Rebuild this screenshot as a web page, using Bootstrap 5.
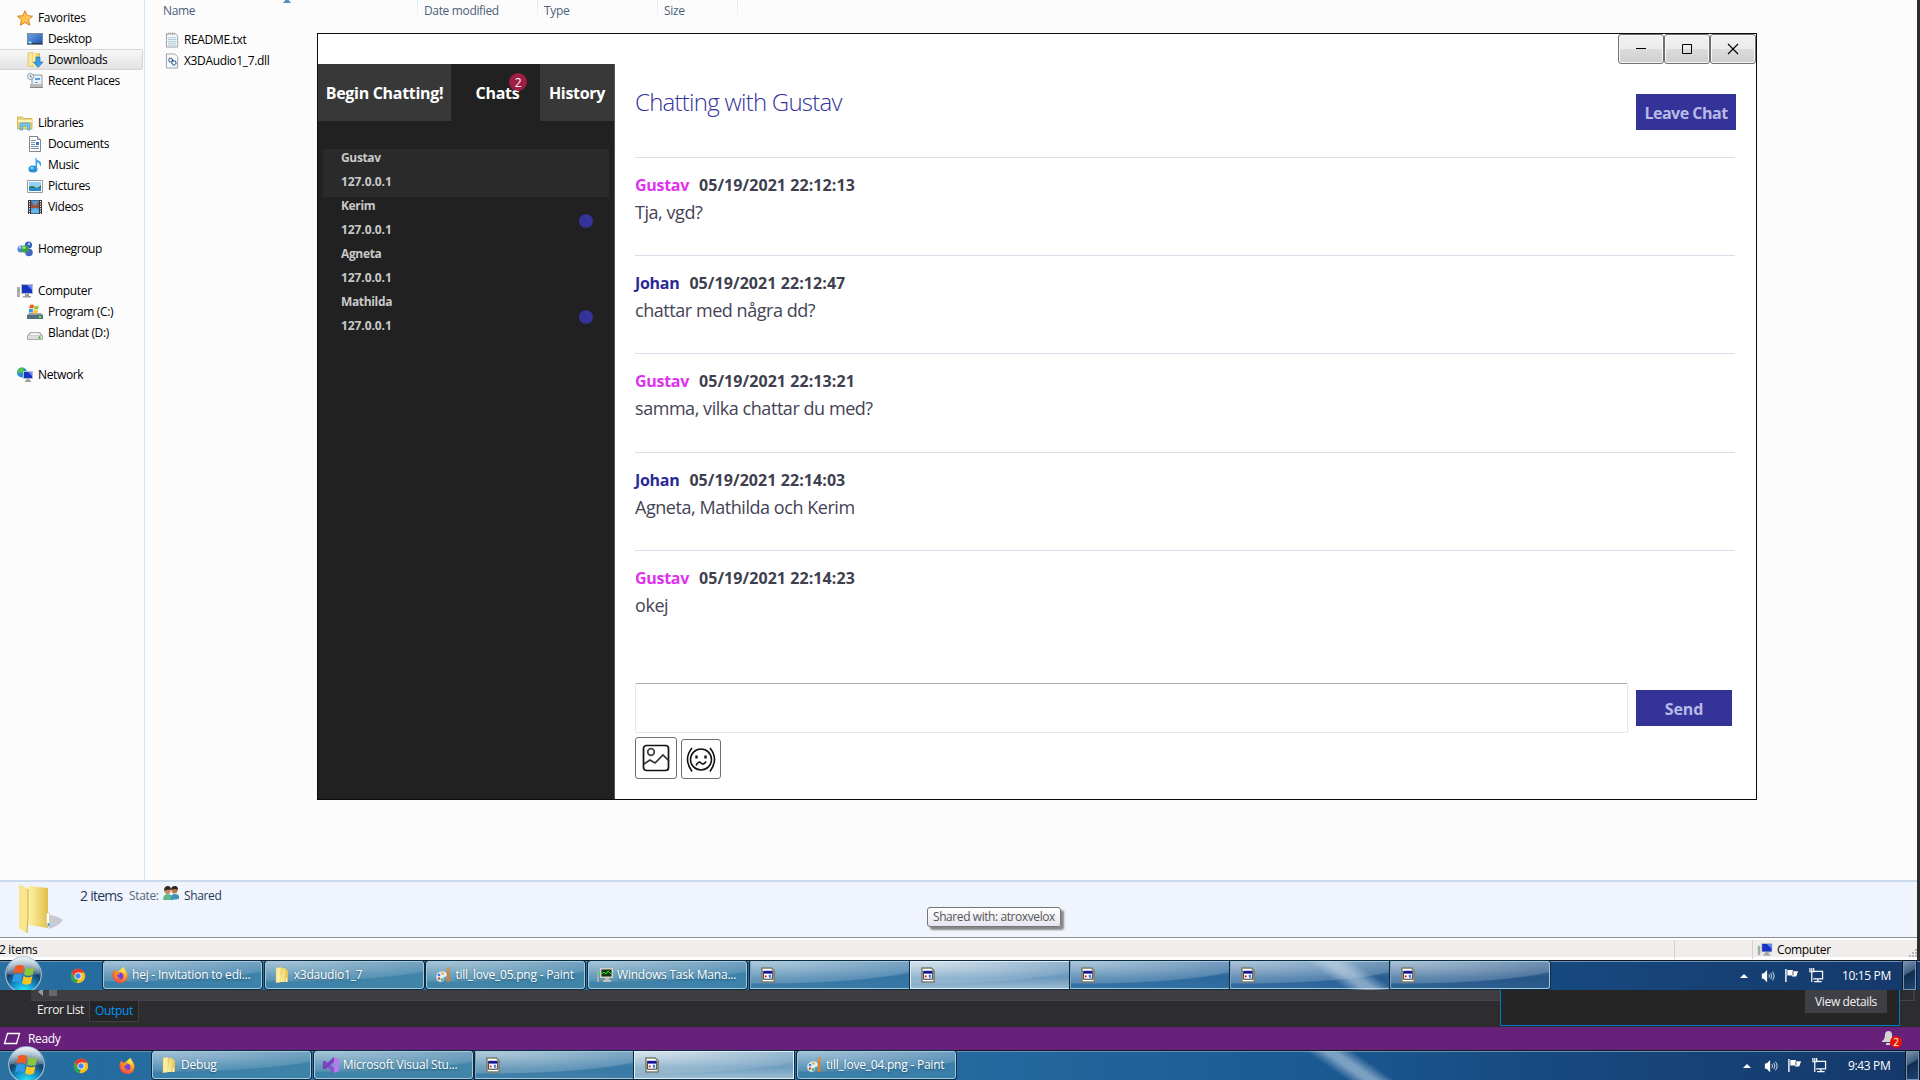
<!DOCTYPE html>
<html lang="en">
<head>
<meta charset="utf-8">
<title>Desktop</title>
<link href="https://cdn.jsdelivr.net/npm/bootstrap@5.3.0/dist/css/bootstrap.min.css" rel="stylesheet">
<style>
body{width:1920px;height:1080px;font-family:"Open Sans","Noto Sans",sans-serif;font-size:12px;line-height:20px;letter-spacing:-.35px;color:#000;background:#2d2d30;white-space:nowrap}
svg{display:block;flex:none}
.explorer{height:960px;width:1917px;background:#fcfcfc}
.navpane{width:145px;border-right:1px solid #cfe2f6;padding-top:7px}
.nrow{height:21px;padding-left:17px}
.nrow.sub{padding-left:27px}
.nrow.sel{width:143px;border:1px solid #d5d5d5;border-left:0;border-radius:0 2px 2px 0;background:linear-gradient(#f7f7f7,#e3e3e3)}
.ngap{height:21px}
.nrow svg{margin-right:5px}
.fhead{height:21px;padding-left:9px;color:#4c607a;line-height:22px}
.fhead div{padding-left:6px;border-right:1px solid;border-image:linear-gradient(#d9e6f1,#fcfcfc) 1}
.frow{height:21px;padding-left:20px}
.details{height:57px;background:#f0f4fc;border-top:2px solid #cbdaec;color:#1e395b}
.status{height:22px;border-top:1px solid #8d8d8d;background:#f1edeb;box-shadow:inset 0 2px #fff,inset 0 -2px #fff}
.stcell{border-left:1px solid #d4d0cf;height:19px;margin-top:2px}
.tipbox{left:927px;top:907px;width:134px;height:20px;border:1px solid #767676;border-radius:3px;background:linear-gradient(#fff,#e4e5f0);color:#575757;box-shadow:3px 3px 2px #888;line-height:18px;padding-left:5px;letter-spacing:-.42px}
.chatwin{left:317px;top:33px;width:1440px;height:767px;border:1px solid #0c0c0c;background:#fff}
.titlebar{height:30px}
.wbtn{width:46px;height:30px;border:1px solid #707070;border-radius:3px;background:linear-gradient(#f2f2f2 0,#ebebeb 50%,#dcdcdc 50%,#cfcfcf 100%);box-shadow:inset 0 0 0 1px #f8f8f8}
.side{width:297px;background:#212121;height:735px;border-right:1px solid #555}
.tabs3{height:57px;color:#fff;font-size:16px;font-weight:700;letter-spacing:-.3px}
.tab3{background:#383838}
.tabact{background:#212121;padding-left:4px}
.cnt{width:18px;height:18px;background:#9e1f43;font-size:12px;font-weight:400;left:58px;top:9px;line-height:19px}
.peer{height:48px;margin:0 5px;padding-left:18px;color:#c9c9c9;font-weight:700;line-height:24px;font-size:12px;letter-spacing:-.35px;position:relative}
.peer.on{background:#2a2a2a}
.peer div{position:relative;top:-3px}
.peer .ip{letter-spacing:-.08px}
.dot{width:14px;height:14px;background:#333399;right:16px;top:17px}
.main{padding:0 21px 0 20px}
.ttl{font-size:24px;font-weight:300;color:#333399;letter-spacing:-.75px;line-height:34px;padding-top:21px}
.bigbtn{background:#333399;color:#b9b9e6;height:36px;font-size:16px;font-weight:700;border:0;padding:2px 0 0;letter-spacing:-.1px}
.msg{border-top:1px solid #dcdcea;height:98.2px;padding-top:16px;color:#444456}
.who{font-size:16px;font-weight:700;line-height:22px;letter-spacing:.07px;color:#3f3f50}
.who b{font-weight:700;letter-spacing:-.3px;color:#dd33ee;margin-right:10px}
.who b.me{color:#2a2a96}
.txt{font-size:18px;line-height:24px;padding-top:4px;letter-spacing:-.45px}
.inp{width:993px;height:50px;border:1px solid #e3e5ef;border-top-color:#abadb3;border-radius:2px}
.ib{border:1px solid #707070;border-radius:3px}
.bar{height:30px;background:linear-gradient(90deg,#2a709f 0,#246b9f 5%,#2e739f 25%,#246a9f 50%,#1b5a93 68%,#174a80 80%,#15386a 100%);color:#fff;border-top:1px solid #101820;box-shadow:inset 0 1px #6c93b5}
.streak{left:1285px;top:0;width:130px;height:29px;background:linear-gradient(35deg,transparent 36%,#cfe0ee88 47%,#cfe0ee88 53%,transparent 64%)}
.tb{width:159px;height:28px;letter-spacing:-.22px;border:1px solid #a4c8dc;border-radius:3px;background:radial-gradient(ellipse 170px 20px at 8% 0,#ffffff77,#ffffff22 95%,transparent 100%),linear-gradient(#ffffff33,#8fd0d033 50%,#8fd0d033);box-shadow:0 0 0 1px #0c2a40;padding-left:8px}
.tb span{position:relative;text-shadow:0 1px 2px #0d3450aa}
.tb svg{margin-right:4px}
.tb.g{border-radius:0;width:160px;border-left-color:#7fa5c0;border-right:0;padding-left:10px;background:radial-gradient(ellipse 170px 22px at 8% 0,#ffffff88,#ffffff30 95%,transparent 100%),linear-gradient(#ffffff33,#ffffff10 60%,#ffffff18)}
.tb.lite{background:radial-gradient(ellipse 170px 22px at 8% 0,#ffffffaa,#ffffff20 95%,transparent 100%),linear-gradient(#ffffff66,#ffffff55 60%,#ffffff88);border:1px solid #e2eef6}
.tb.g.lastg{border-right:1px solid #a4c8dc;border-radius:0 3px 3px 0}
.orb{z-index:3}
.showd{width:13px;height:29px;border:1px solid #7992ad;background:linear-gradient(150deg,#7b93ab,#3b5c80 40%,#132c4c 42%,#1c4573);box-shadow:0 0 0 1px #0b1c30}
.vs{height:37px;background:#2d2d30;color:#f1f1f1}
.vstop{left:31px;top:0;width:1884px;height:11px;background:#3e3e42;border-bottom:1px solid #46464a}
.notice{left:1500px;top:0;width:400px;height:36px;border:1px solid #007acc;border-top:0;background:#252526}
.vbtn{width:82px;height:23px;background:#3f3f46;margin-right:12px;line-height:24px}
.outtab{width:50px;height:22px;border:1px solid #3f3f46;background:#252526;color:#0097fb;line-height:19px}
.ready{height:23px;background:#68217a;color:#fff}
.bn{width:12px;height:12px;background:#e51400;font-size:10px;line-height:12px;left:8px;top:5px}
</style>
<script src="https://cdn.jsdelivr.net/npm/bootstrap@5.3.0/dist/js/bootstrap.bundle.min.js"></script>
</head>
<body class="position-relative overflow-hidden">
<svg width="0" height="0" class="position-absolute">
<defs>
<linearGradient id="gold" x1="0" x2="1"><stop offset="0" stop-color="#fff3a8"/><stop offset="1" stop-color="#e3bf4c"/></linearGradient>
<linearGradient id="blu" x1="0" x2="1" y2="1"><stop offset="0" stop-color="#6ea4e8"/><stop offset="1" stop-color="#1c4fa8"/></linearGradient>
<radialGradient id="orbg" cx=".5" cy="1" r=".95"><stop offset="0" stop-color="#2ff0ff"/><stop offset=".35" stop-color="#1592c8"/><stop offset=".65" stop-color="#173f68"/><stop offset="1" stop-color="#9fbdd2"/></radialGradient>
<radialGradient id="fxg" cx=".7" cy=".2" r="1"><stop offset="0" stop-color="#fff14a"/><stop offset=".45" stop-color="#ff9a1a"/><stop offset="1" stop-color="#f0205c"/></radialGradient>
<linearGradient id="shine" y2="1" x2="0"><stop offset="0" stop-color="#fff" stop-opacity=".75"/><stop offset="1" stop-color="#fff" stop-opacity=".12"/></linearGradient>
</defs>
<symbol id="star" viewBox="0 0 16 16"><path d="M8 .8l2.200 4.900 5.300.5-4 3.600 1.200 5.400L8 12.400l-4.700 2.800 1.200-5.400-4-3.600 5.300-.5z" fill="#ffc24a" stroke="#e07a1e"/><path d="M8 2.500l1.500 4 4 .3-3 1z" fill="#ffe9a8"/></symbol>
<symbol id="desk" viewBox="0 0 16 16"><rect x=".5" y="2.500" width="15" height="11" fill="url(#blu)" stroke="#7c8896"/><path d="M1 12h14v1H1z" fill="#26364c"/><path d="M2 10l3 1-1 2-3-1z" fill="#7fe0ff"/></symbol>
<symbol id="down" viewBox="0 0 16 16"><path d="M1 1l5-1v15l-5-1z" fill="#f8e69a" stroke="#d4b350" stroke-width=".6"/><path d="M6 1h7v13H6z" fill="url(#gold)"/><path d="M9 5h4v5h3l-5 5.500L6.500 10H9z" fill="#35a0ee" stroke="#1663a8" stroke-width=".6"/></symbol>
<symbol id="recent" viewBox="0 0 16 16"><path d="M5 2h10v10H5z" fill="#eaf3fa" stroke="#8b98a4"/><path d="M8 5h5v2H8zM8 9h3v1H8z" fill="#5aa3e0"/><path d="M3 11h13v4H3z" fill="#b9b9b9"/><path d="M3 14h13v1H3z" fill="#888"/><circle cx="3.500" cy="3.500" r="3" fill="#eef2f5" stroke="#8b98a4"/><path d="M3.500 2v2h1.500" stroke="#456" fill="none" stroke-width=".7"/></symbol>
<symbol id="lib" viewBox="0 0 16 16"><path d="M.5 2h5l1 1.500H15V14H.5z" fill="#ecd67c" stroke="#c8a748" stroke-width=".8"/><path d="M1 5h14v2H1z" fill="#fff3b8"/><path d="M3 15V9q0-1 1-1h8q1 0 1 1v6h-2.500v-4h-5v4z" fill="#7cc8ea" stroke="#3d95c4" stroke-width=".7"/></symbol>
<symbol id="doc" viewBox="0 0 16 16"><path d="M2.500.5h8l3 3v12h-11z" fill="#fff" stroke="#84878c"/><path d="M10.500.5v3h3" fill="#dde" stroke="#84878c"/><path d="M4 4.500h5M4 6.500h4M4 8.500h4M4 10.500h8M4 12.500h8" stroke="#7d90ad"/><path d="M9 6h3v3H9z" fill="#2b79c8"/></symbol>
<symbol id="music" viewBox="0 0 16 16"><ellipse cx="6" cy="12" rx="4.500" ry="3.600" fill="#2390d8"/><path d="M8.500 12V0q1 3 4 4 3 2 .5 6 .5-4-3-4.500V12z" fill="#3fa2e4"/><ellipse cx="5" cy="11" rx="2" ry="1.200" fill="#7fd0f8"/></symbol>
<symbol id="pict" viewBox="0 0 16 16"><path d="M.5 2.500h15v12H.5z" fill="#fff" stroke="#999"/><path d="M2 4h12v9H2z" fill="#8fd0f4"/><path d="M2 9q3-2 6 0t6-2v3H2z" fill="#2b7a5e"/><path d="M2 10h12v3H2z" fill="#2b8ac8"/></symbol>
<symbol id="vid" viewBox="0 0 16 16"><path d="M1 1h14v14H1z" fill="#33373c"/><path d="M4 1.500h8v13H4z" fill="#4f9bd6"/><path d="M4 2l4 5 4-5v7H4z" fill="#a0523c"/><path d="M4 12l4-3 4 3v2H4z" fill="#63b8f0"/><path d="M2.500 2v13M13.500 2v13" stroke="#fff" stroke-dasharray="1.200 1.200"/></symbol>
<symbol id="home" viewBox="0 0 16 16"><circle cx="4" cy="8" r="3.500" fill="#4a7fe0"/><circle cx="11.500" cy="4" r="3.600" fill="#3a63c8"/><circle cx="12" cy="11.500" r="3.800" fill="#4763c4"/><circle cx="8" cy="8" r="3.800" fill="#3aa63c"/><circle cx="7" cy="6.500" r="1.500" fill="#9be28a"/><circle cx="3" cy="6.500" r="1.200" fill="#b8d4ff"/><circle cx="12" cy="3" r="1.200" fill="#a8c4ff"/></symbol>
<symbol id="comp" viewBox="0 0 16 16"><path d="M0 4h3v10H0z" fill="#a9aeb4"/><path d="M1 6h1v2H1z" fill="#4c4"/><path d="M4 1h12v10H4z" fill="#b9bcc2"/><path d="M5 2h10v8H5z" fill="#1734c4"/><path d="M10 2h5v5z" fill="#6d8df0"/><path d="M8 11h4v2h2v1.500H6V13h2z" fill="#9a9da2"/></symbol>
<symbol id="flagw" viewBox="0 0 16 16"><path d="M2 2.500q3-2 6 0L7 7.600q-3-1.800-6 0z" fill="#f05a22"/><path d="M9 3q3 1.800 6 0l-1 5q-3 1.800-6 0z" fill="#8cc63e"/><path d="M.800 8.600q3-1.800 6 0l-1 5q-3-1.800-6 0z" fill="#2e9be6"/><path d="M7.700 9q3 1.800 6 0l-1 5q-3 1.800-6 0z" fill="#fdc41e"/></symbol>
<symbol id="cdrive" viewBox="0 0 16 16"><path d="M2 9h12l2 2v4H0v-4z" fill="#9aa0a5"/><path d="M0 11h16v4H0z" fill="#55707c"/><path d="M12 12h2v2h-2z" fill="#5f5"/><use href="#flagw" x="1.500" y="-.5" width="11" height="11"/></symbol>
<symbol id="ddrive" viewBox="0 0 16 16"><path d="M3 7h10l3 4v3q0 1-1 1H1q-1 0-1-1v-3z" fill="#a9abad"/><path d="M4 8h8l2 2.500H2z" fill="#f2f2f2"/><path d="M1 11h14v3H1z" fill="#dedede"/><path d="M11.500 11.500h2v2h-2z" fill="#39a939"/></symbol>
<symbol id="netw" viewBox="0 0 16 16"><circle cx="5" cy="5.500" r="5" fill="#1f8fd0"/><path d="M3 1q4-1 4 2T3 6 1 9Q-1 4 3 1z" fill="#56c24a"/><path d="M6 4h10v8H6z" fill="#b9bcc2"/><path d="M7 5h8v6H7z" fill="#1734c4"/><path d="M11 5h4v4z" fill="#6d8df0"/><path d="M9.500 12h3v1.500H14V15H8v-1.500h1.500z" fill="#9a9da2"/></symbol>
<symbol id="txtf" viewBox="0 0 16 16"><path d="M1.500 1.500h10l2 2v12h-12z" fill="#f6fafc" stroke="#9a9da0"/><path d="M3 5.500h9M3 7.500h9M3 9.500h9M3 11.500h9M3 13.500h9" stroke="#a9c6d8"/><path d="M2 1v2M4 0v2M6 0v2M8 0v2M10 0v2" stroke="#888" stroke-width=".7"/></symbol>
<symbol id="dllf" viewBox="0 0 16 16"><path d="M1.500.500h9l3 3v12h-12z" fill="#fafafa" stroke="#9a9da0"/><circle cx="6" cy="7" r="2" fill="none" stroke="#2f5f94" stroke-width="1.500" stroke-dasharray="1.200 .5"/><circle cx="9.500" cy="10" r="2.200" fill="none" stroke="#2f5f94" stroke-width="1.500" stroke-dasharray="1.200 .5"/></symbol>
<symbol id="ppl" viewBox="0 0 16 16"><circle cx="4.500" cy="5" r="3" fill="#c88a5a"/><path d="M1 5q0-5 4-5 3 0 3 4-4-1-7 1z" fill="#3a2a1c"/><circle cx="11.500" cy="4.500" r="3" fill="#b87848"/><path d="M8 4q0-4 4-4 3 0 3 4-3-2-7 0z" fill="#2c2018"/><path d="M0 14q0-6 5-6t5 6z" fill="#5fb58c"/><path d="M8 14q-1-6 4-6t4 5z" fill="#3f95b8"/></symbol>
<symbol id="chrome" viewBox="0 0 16 16"><circle cx="8" cy="8" r="7.200" fill="#fbc116"/><path d="M1.700 4.400A7.200 7.200 0 0 1 14.300 4.400H8L5 9.500z" fill="#e8382b"/><path d="M1.700 4.400L5 10l3 1.600-1.500 3.500A7.200 7.200 0 0 1 1.700 4.400z" fill="#31a350"/><circle cx="8" cy="8" r="3.500" fill="#fff"/><circle cx="8" cy="8" r="2.700" fill="#4285f4"/></symbol>
<symbol id="fox" viewBox="0 0 16 16"><path d="M9 2q1-2 3-2 0 2 2 4 2 3 1.500 6Q14 16 8 16T.5 9Q0 5 2.500 2.500L4 5l3-1q0-1 2-2z" fill="url(#fxg)"/><circle cx="8" cy="9" r="3.500" fill="#7a3fe0"/><path d="M3 6q4-2 5 1-2 1-3 1 0 3 4 3-4 2-6-1z" fill="#ff8a1c"/></symbol>
<symbol id="fold" viewBox="0 0 16 16"><path d="M2 1l5-1v15l-5 1z" fill="#fbeea4" stroke="#d8b84c" stroke-width=".5"/><path d="M7 1h5v12H7z" fill="#ecd372"/><path d="M9 3h5v12H7v-2z" fill="url(#gold)"/><path d="M12 11h1v4h-1z" fill="#eaf5ff"/></symbol>
<symbol id="paint" viewBox="0 0 16 16"><path d="M1 10q0-5 6-6 5 0 5 4 0 2-2 2t-1 2q0 3-4 3-4-1-4-5z" fill="#dff0f8" stroke="#7fa8bd" stroke-width=".6"/><circle cx="4" cy="8" r="1.300" fill="#3b78e0"/><circle cx="7.500" cy="6.500" r="1.300" fill="#f5a623"/><circle cx="4" cy="11.500" r="1.300" fill="#e04a32"/><circle cx="7" cy="12.500" r="1.200" fill="#4caf50"/><path d="M12 4h2l.5 11h-2.500z" fill="#e8791e"/><path d="M11 1l4-1v4h-3z" fill="#c79362"/></symbol>
<symbol id="task" viewBox="0 0 16 16"><path d="M0 5h2v10H0z" fill="#a9aeb4"/><path d="M1 5h1v3H1z" fill="#3e3"/><path d="M3 1h13v10H3z" fill="#d4d0c8"/><path d="M4.500 2.500h10v7h-10z" fill="#173018"/><path d="M5 7l2-2 2 2 2-3 3 3" fill="none" stroke="#2f2"/><path d="M8 11h4v2h2v2H6v-2h2z" fill="#c4c0b8"/></symbol>
<symbol id="app" viewBox="0 0 16 16"><path d="M1 .5h10l3 3v12H1z" fill="#fff" stroke="#7b7b6c" stroke-width="1.600"/><path d="M2.500 4h10v8.500h-10z" fill="#fff" stroke="#222"/><path d="M3 4h9v2.500H3z" fill="#0a0a9c"/><path d="M4 8.500h2v2H4z" fill="#d01818"/><path d="M9 7.500h1v4H9zM8 8.500h3v1H8z" fill="#1a50e0"/><path d="M10 10h1v1h-1z" fill="#1a9a1a"/></symbol>
<symbol id="vsl" viewBox="0 0 16 16"><path d="M11 0l5 2v12l-5 2z" fill="#b57be8"/><path d="M0 4.500L2 3.500 11 11v5L0 6z" fill="#8c4fd4"/><path d="M0 11.500L2 12.500 11 5V0L0 10z" fill="#7d3fc0"/><path d="M0 4.500h1.500v7H0z" fill="#7436b4"/></symbol>
<symbol id="orbi" viewBox="0 0 36 36"><circle cx="18" cy="18" r="17.300" fill="url(#orbg)" stroke="#a8c8dc" stroke-width="1"/><path d="M2 17a16 16 0 0 1 32 0q-16 6-32 0z" fill="url(#shine)"/><use href="#flagw" x="7" y="6" width="23" height="24"/></symbol>
<symbol id="spk" viewBox="0 0 16 16"><path d="M1 5h2l4-4v14l-4-4H1z" fill="#fff"/><path d="M9 6q1.500 2 0 4M11 4.500q3 3.500 0 7M13 3q4 5 0 10" fill="none" stroke="#e8f0f6"/></symbol>
<symbol id="flg" viewBox="0 0 16 16"><path d="M1.500 1v14" stroke="#fff" stroke-width="1.500"/><path d="M3 2h6v1.500h5.500l-2 5.500H8V8H3z" fill="#fff"/><path d="M9 3.500V8" stroke="#456"/></symbol>
<symbol id="lan" viewBox="0 0 16 16"><path d="M5 3.500h10v8H5" fill="none" stroke="#fff" stroke-width="1.300"/><path d="M10 12v2M6 14.500h8" stroke="#fff" stroke-width="1.500"/><path d="M1.500 0v4h4V0M3.500 0v15" fill="none" stroke="#fff" stroke-width="1.300"/></symbol>
</svg>

<div class="explorer d-flex flex-column">
 <div class="d-flex" style="height:880px">
  <nav class="navpane">
   <div class="nrow d-flex align-items-center"><svg width="16" height="16"><use href="#star"/></svg>Favorites</div>
   <div class="nrow sub d-flex align-items-center"><svg width="16" height="16"><use href="#desk"/></svg>Desktop</div>
   <div class="nrow sub sel d-flex align-items-center"><svg width="16" height="16"><use href="#down"/></svg>Downloads</div>
   <div class="nrow sub d-flex align-items-center"><svg width="16" height="16"><use href="#recent"/></svg>Recent Places</div>
   <div class="ngap"></div>
   <div class="nrow d-flex align-items-center"><svg width="16" height="16"><use href="#lib"/></svg>Libraries</div>
   <div class="nrow sub d-flex align-items-center"><svg width="16" height="16"><use href="#doc"/></svg>Documents</div>
   <div class="nrow sub d-flex align-items-center"><svg width="16" height="16"><use href="#music"/></svg>Music</div>
   <div class="nrow sub d-flex align-items-center"><svg width="16" height="16"><use href="#pict"/></svg>Pictures</div>
   <div class="nrow sub d-flex align-items-center"><svg width="16" height="16"><use href="#vid"/></svg>Videos</div>
   <div class="ngap"></div>
   <div class="nrow d-flex align-items-center"><svg width="16" height="16"><use href="#home"/></svg>Homegroup</div>
   <div class="ngap"></div>
   <div class="nrow d-flex align-items-center"><svg width="16" height="16"><use href="#comp"/></svg>Computer</div>
   <div class="nrow sub d-flex align-items-center"><svg width="16" height="16"><use href="#cdrive"/></svg>Program (C:)</div>
   <div class="nrow sub d-flex align-items-center"><svg width="16" height="16"><use href="#ddrive"/></svg>Blandat (D:)</div>
   <div class="ngap"></div>
   <div class="nrow d-flex align-items-center"><svg width="16" height="16"><use href="#netw"/></svg>Network</div>
  </nav>
  <div class="flex-grow-1 position-relative">
   <svg class="position-absolute" style="left:138px;top:0" width="8" height="3"><path d="M4 -2L8 3H0z" fill="#5a8fb8"/></svg>
   <div class="fhead d-flex"><div style="width:264px;padding-left:9px">Name</div><div style="width:120px">Date modified</div><div style="width:120px">Type</div><div style="width:80px">Size</div></div>
   <div style="height:8px"></div>
   <div class="frow d-flex align-items-center"><svg class="me-1" width="15" height="16"><use href="#txtf"/></svg>README.txt</div>
   <div class="frow d-flex align-items-center"><svg class="me-1" width="15" height="16"><use href="#dllf"/></svg>X3DAudio1_7.dll</div>
  </div>
 </div>
 <div class="details d-flex">
  <svg width="64" height="55" viewBox="0 0 64 55"><path d="M48 33q8 0 15 5-4 6-14 9z" fill="#8a8c96" opacity=".4"/><path d="M28 4l20 2v40l-20-3z" fill="url(#gold)"/><path d="M19 2l9 5v28l-1 16-8-5z" fill="#f8e68e"/><path d="M28 7v28l-1 16" fill="none" stroke="#cfae4a"/><path d="M46.500 31h3v13h-3z" fill="#fff" stroke="#d9bf63" stroke-width=".5"/><path d="M47.500 41h2v3h-2z" fill="#4a9ae8"/></svg>
  <div class="d-flex" style="padding:4px 0 0 16px"><span style="font-size:14px;width:49px;letter-spacing:-.75px">2 items</span><span style="color:#5a6779;width:34px">State:</span><svg style="margin-right:5px" width="16" height="14" viewBox="0 0 16 14"><use href="#ppl" width="16" height="16"/></svg>Shared</div>
 </div>
 <div class="status d-flex">
  <div class="flex-grow-1" style="margin-left:-1px;line-height:24px">2 items</div>
  <div class="stcell" style="width:78px"></div>
  <div class="stcell d-flex align-items-center" style="width:165px;padding-left:4px"><svg width="16" height="15" class="me-1" viewBox="0 0 16 16"><use href="#comp"/></svg><span style="padding-top:1px">Computer</span>
   <svg style="margin-left:78px;margin-top:6px" width="8" height="8" fill="#b8b4b2"><path d="M6 0h2v2H6zM3 3h2v2H3zM6 3h2v2H6zM0 6h2v2H0zM3 6h2v2H3zM6 6h2v2H6z"/></svg></div>
 </div>
</div>

<div class="tipbox position-absolute">Shared with: atroxvelox</div>

<section class="chatwin position-absolute">
 <div class="titlebar d-flex justify-content-end">
  <div class="wbtn"><svg width="44" height="28"><path d="M17 13.500h10" stroke="#000"/></svg></div>
  <div class="wbtn"><svg width="44" height="28"><path d="M17.500 9.500h9v9h-9z" fill="none" stroke="#000"/></svg></div>
  <div class="wbtn"><svg width="44" height="28"><path d="M17 9l10 10M27 9L17 19" stroke="#000" stroke-width="1.100"/></svg></div>
 </div>
 <div class="d-flex">
  <aside class="side">
   <div class="tabs3 d-flex text-center">
    <div class="tab3 d-flex align-items-center justify-content-center" style="width:133px">Begin Chatting!</div>
    <div class="tab3 tabact d-flex align-items-center justify-content-center position-relative" style="width:89px">Chats<span class="cnt rounded-circle position-absolute">2</span></div>
    <div class="tab3 d-flex align-items-center justify-content-center" style="width:74px">History</div>
   </div>
   <div style="height:28px"></div>
   <div class="peer on"><div>Gustav</div><div class="ip">127.0.0.1</div></div>
   <div class="peer"><div>Kerim</div><div class="ip">127.0.0.1</div><span class="dot rounded-circle position-absolute"></span></div>
   <div class="peer"><div>Agneta</div><div class="ip">127.0.0.1</div></div>
   <div class="peer"><div>Mathilda</div><div class="ip">127.0.0.1</div><span class="dot rounded-circle position-absolute"></span></div>
  </aside>
  <main class="main flex-grow-1">
   <div class="d-flex justify-content-between" style="height:93px"><div class="ttl">Chatting with Gustav</div><button class="bigbtn" style="width:100px;margin:30px -1px 0 0;letter-spacing:-.5px">Leave Chat</button></div>
   <div class="msg"><div class="who"><b>Gustav</b>05/19/2021 22:12:13</div><div class="txt">Tja, vgd?</div></div>
   <div class="msg"><div class="who"><b class="me">Johan</b>05/19/2021 22:12:47</div><div class="txt">chattar med några dd?</div></div>
   <div class="msg"><div class="who"><b>Gustav</b>05/19/2021 22:13:21</div><div class="txt">samma, vilka chattar du med?</div></div>
   <div class="msg"><div class="who"><b class="me">Johan</b>05/19/2021 22:14:03</div><div class="txt">Agneta, Mathilda och Kerim</div></div>
   <div class="msg"><div class="who"><b>Gustav</b>05/19/2021 22:14:23</div><div class="txt">okej</div></div>
   <div class="d-flex" style="height:54px;padding-top:35px;box-sizing:content-box"><div class="inp"></div><button class="bigbtn" style="width:96px;margin:7px 0 0 8px">Send</button></div>
   <div class="d-flex align-items-end">
    <div class="ib" style="width:42px;height:42px"><svg width="40" height="40" fill="none" stroke="#111" stroke-width="1.700"><rect x="7.500" y="7.500" width="25" height="25" rx="3"/><circle cx="15" cy="14" r="3.300" stroke="#444"/><path d="M8 26l6-4 5 3 8-8 6 6" stroke="#333"/></svg></div>
    <div class="ib" style="width:40px;height:40px;margin-left:4px"><svg width="38" height="38" fill="none" stroke="#111" stroke-width="1.600"><circle cx="19" cy="19.500" r="10.500"/><path d="M10 8q-9 11 0 23.500M28 8q9 11 0 23.500"/><path d="M14.500 15.500v3M23.500 15.500v3" stroke-width="2.400"/><path d="M14 25.500q2.500-5 5-2.500t5-1.500"/></svg></div>
   </div>
  </main>
 </div>
</section>

<div class="bar d-flex position-relative">
 <div class="streak position-absolute"></div>
 <svg class="orb position-absolute" style="left:5px;top:-5px" width="37" height="34" viewBox="0 0 37 34"><use href="#orbi" width="37" height="37"/></svg>
 <div class="d-flex align-items-center" style="width:103px;padding-left:70px"><svg width="16" height="16"><use href="#chrome"/></svg></div>
 <div class="d-flex" style="gap:2.700px">
  <div class="tb d-flex align-items-center"><svg width="16" height="16"><use href="#fox"/></svg><span>hej - Invitation to edi...</span></div>
  <div class="tb d-flex align-items-center"><svg width="16" height="16"><use href="#fold"/></svg><span>x3daudio1_7</span></div>
  <div class="tb d-flex align-items-center"><svg width="16" height="16"><use href="#paint"/></svg><span>till_love_05.png - Paint</span></div>
  <div class="tb d-flex align-items-center"><svg width="16" height="16"><use href="#task"/></svg><span>Windows Task Mana...</span></div>
  <div class="d-flex">
   <div class="tb g d-flex align-items-center"><svg width="15" height="16"><use href="#app"/></svg></div>
   <div class="tb g lite d-flex align-items-center"><svg width="15" height="16"><use href="#app"/></svg></div>
   <div class="tb g d-flex align-items-center"><svg width="15" height="16"><use href="#app"/></svg></div>
   <div class="tb g d-flex align-items-center"><svg width="15" height="16"><use href="#app"/></svg></div>
   <div class="tb g lastg d-flex align-items-center"><svg width="15" height="16"><use href="#app"/></svg></div>
  </div>
 </div>
 <div class="d-flex align-items-center ms-auto" style="margin-right:4px">
  <svg width="8" height="4" style="margin-right:12px"><path d="M4 0l4 4H0z" fill="#fff"/></svg>
  <svg width="16" height="14" style="margin-right:8px"><use href="#spk"/></svg><svg width="16" height="15" style="margin-right:8px"><use href="#flg"/></svg><svg width="16" height="15" style="margin-right:18px"><use href="#lan"/></svg><span style="width:61px">10:15 PM</span><div class="showd"></div>
 </div>
</div>

<div class="vs position-relative">
 <div class="vstop position-absolute"><svg width="30" height="7"><path d="M12 0v6l-5-4 2-2z" fill="#999"/><path d="M18 0h8v6h-8z" fill="#686868"/></svg></div>
 <div class="d-flex position-relative" style="padding:10px 0 0 37px"><span style="width:52px;letter-spacing:-.42px">Error List</span><span class="outtab text-center">Output</span></div>
 <div class="notice position-absolute d-flex justify-content-end"><div class="vbtn text-center">View details</div></div>
 <div class="position-absolute" style="left:1900px;top:0;width:13px;height:10px;background:#2d2d30"></div>
</div>
<div class="ready d-flex align-items-center"><svg width="18" height="13" style="margin:0 7px 0 3px"><path d="M4.500 1.500h12l-3 10h-12z" fill="none" stroke="#fff" stroke-width="1.300"/></svg><span class="flex-grow-1">Ready</span>
 <span class="position-relative" style="margin-right:22px;width:16px;height:16px"><svg width="14" height="15"><path d="M0 10q3-2 3-6 0-4 3.500-4T10 4t1 6v1H0zM4 12h4v2H4z" fill="#d4d4d4"/></svg><span class="bn rounded-circle position-absolute text-center">2</span></span></div>

<div class="bar d-flex position-relative">
 <div class="streak position-absolute"></div>
 <svg class="orb position-absolute" style="left:8px;top:-5px" width="37" height="34" viewBox="0 0 37 34"><use href="#orbi" width="37" height="37"/></svg>
 <div class="d-flex align-items-center" style="width:152px;padding-left:73px"><svg width="16" height="16" style="margin-right:30px"><use href="#chrome"/></svg><svg width="16" height="16"><use href="#fox"/></svg></div>
 <div class="d-flex" style="gap:2.700px">
  <div class="tb d-flex align-items-center"><svg width="16" height="16"><use href="#fold"/></svg><span>Debug</span></div>
  <div class="tb d-flex align-items-center"><svg width="16" height="16"><use href="#vsl"/></svg><span>Microsoft Visual Stu...</span></div>
  <div class="d-flex"><div class="tb g d-flex align-items-center" style="width:159px"><svg width="15" height="16"><use href="#app"/></svg></div><div class="tb g lite d-flex align-items-center"><svg width="15" height="16"><use href="#app"/></svg></div></div>
  <div class="tb d-flex align-items-center"><svg width="16" height="16"><use href="#paint"/></svg><span>till_love_04.png - Paint</span></div>
 </div>
 <div class="d-flex align-items-center ms-auto" style="margin-right:1px">
  <svg width="8" height="4" style="margin-right:12px"><path d="M4 0l4 4H0z" fill="#fff"/></svg>
  <svg width="16" height="14" style="margin-right:8px"><use href="#spk"/></svg><svg width="16" height="15" style="margin-right:8px"><use href="#flg"/></svg><svg width="16" height="15" style="margin-right:21px"><use href="#lan"/></svg><span style="width:58px">9:43 PM</span><div class="showd"></div>
 </div>
</div>
</body>
</html>
